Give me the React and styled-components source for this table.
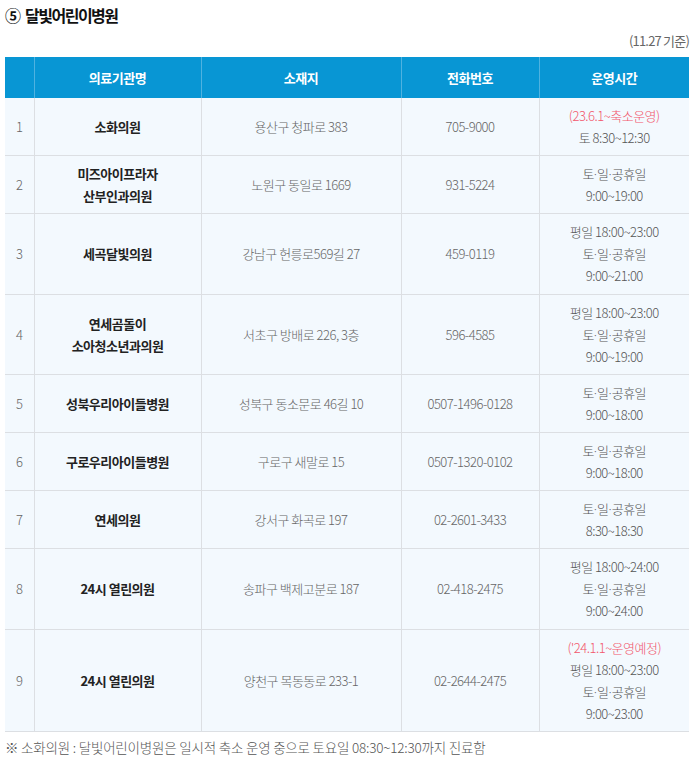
import styled, { createGlobalStyle } from 'styled-components';

const GlobalStyle = createGlobalStyle`
  body {
    margin: 0;
    background: #fff;
    font-family: 'Noto Sans CJK KR', 'Noto Sans', sans-serif;
  }
`;

const clinics = [
  { no: 1, name: ['소화의원'], addr: '용산구 청파로 383', tel: '705-9000', notice: '(23.6.1~축소운영)', hours: ['토 8:30~12:30'] },
  { no: 2, name: ['미즈아이프라자', '산부인과의원'], addr: '노원구 동일로 1669', tel: '931-5224', hours: ['토·일·공휴일', '9:00~19:00'] },
  { no: 3, name: ['세곡달빛의원'], addr: '강남구 헌릉로569길 27', tel: '459-0119', hours: ['평일 18:00~23:00', '토·일·공휴일', '9:00~21:00'] },
  { no: 4, name: ['연세곰돌이', '소아청소년과의원'], addr: '서초구 방배로 226, 3층', tel: '596-4585', hours: ['평일 18:00~23:00', '토·일·공휴일', '9:00~19:00'] },
  { no: 5, name: ['성북우리아이들병원'], addr: '성북구 동소문로 46길 10', tel: '0507-1496-0128', hours: ['토·일·공휴일', '9:00~18:00'] },
  { no: 6, name: ['구로우리아이들병원'], addr: '구로구 새말로 15', tel: '0507-1320-0102', hours: ['토·일·공휴일', '9:00~18:00'] },
  { no: 7, name: ['연세의원'], addr: '강서구 화곡로 197', tel: '02-2601-3433', hours: ['토·일·공휴일', '8:30~18:30'] },
  { no: 8, name: ['24시 열린의원'], addr: '송파구 백제고분로 187', tel: '02-418-2475', hours: ['평일 18:00~24:00', '토·일·공휴일', '9:00~24:00'] },
  { no: 9, name: ['24시 열린의원'], addr: '양천구 목동동로 233-1', tel: '02-2644-2475', notice: "('24.1.1~운영예정)", hours: ['평일 18:00~23:00', '토·일·공휴일', '9:00~23:00'] },
];

// the middle dot is full width in the CJK font, so set it narrow
const withDots = text =>
  text.split('·').flatMap((part, i) => (i === 0 ? [part] : [<Dot key={i}>·</Dot>, part]));

export default function App() {
  return (
    <Wrap>
      <GlobalStyle />
      <Title>
        <Circled>⑤</Circled> 달빛어린이병원
      </Title>
      <Basis>(11.27 기준)</Basis>
      <Table>
        <colgroup>
          <col style={{ width: 29 }} />
          <col style={{ width: 167 }} />
          <col style={{ width: 200 }} />
          <col style={{ width: 138 }} />
          <col />
        </colgroup>
        <thead>
          <tr>
            <Th />
            <Th>의료기관명</Th>
            <Th>소재지</Th>
            <Th>전화번호</Th>
            <Th>운영시간</Th>
          </tr>
        </thead>
        <tbody>
          {clinics.map(c => (
            <tr key={c.no}>
              <Td $tone="num">{c.no}</Td>
              <Td $tone="name">
                {c.name.map(n => <Line key={n}>{n}</Line>)}
              </Td>
              <Td>{c.addr}</Td>
              <Td>{c.tel}</Td>
              <Td $tone="hours">
                {c.notice && <Notice>{c.notice}</Notice>}
                {c.hours.map(h => <Line key={h}>{withDots(h)}</Line>)}
              </Td>
            </tr>
          ))}
        </tbody>
      </Table>
      <Footnote>※ 소화의원 : 달빛어린이병원은 일시적 축소 운영 중으로 토요일 08:30~12:30까지 진료함</Footnote>
    </Wrap>
  );
}

const Wrap = styled.div`
  width: 684px;
  padding: 4px 7px 0 5px;
`;

const Title = styled.h3`
  margin: 0;
  display: flex;
  align-items: center;
  gap: 4px;
  height: 22px;
  font-size: 16px;
  font-weight: 700;
  letter-spacing: -1.5px;
  color: #111;
`;

const Circled = styled.span`
  font-size: 16px;
  font-weight: 700;
  letter-spacing: 0;
`;

const Basis = styled.div`
  margin-top: 5px;
  text-align: right;
  font-size: 13px;
  line-height: 20px;
  letter-spacing: -0.8px;
  color: #666;
`;

const Table = styled.table`
  margin-top: 6px;
  width: 684px;
  table-layout: fixed;
  border-collapse: collapse;
  font-size: 13px;
  letter-spacing: -0.5px;
`;

const Th = styled.th`
  height: 41px;
  padding: 0;
  background: #0896d4;
  color: #fff;
  font-weight: 700;
  text-align: center;
  border-right: 1px solid #4fb2e0;

  &:last-child {
    border-right: none;
  }
`;

const toneColor = {
  num: '#666',
  name: '#222',
  hours: '#555',
};

const Td = styled.td`
  padding: 7px 2px 6.2px;
  line-height: 22px;
  text-align: center;
  vertical-align: middle;
  background: #f3f9fe;
  border-right: 1px solid #dcdfe3;
  border-bottom: 1px solid #dcdfe3;
  color: ${p => toneColor[p.$tone] || '#666'};
  font-weight: ${p => (p.$tone === 'name' ? 700 : 300)};

  &:last-child {
    border-right: none;
  }
`;

const Line = styled.div``;

const Dot = styled.span`
  font-family: 'Noto Sans', sans-serif;
  letter-spacing: 0;
`;

const Notice = styled.div`
  color: #f2566b;
`;

const Footnote = styled.p`
  margin: 6px 0 0;
  font-size: 13.5px;
  line-height: 18px;
  letter-spacing: -0.2px;
  color: #555;
  font-weight: 300;
`;
